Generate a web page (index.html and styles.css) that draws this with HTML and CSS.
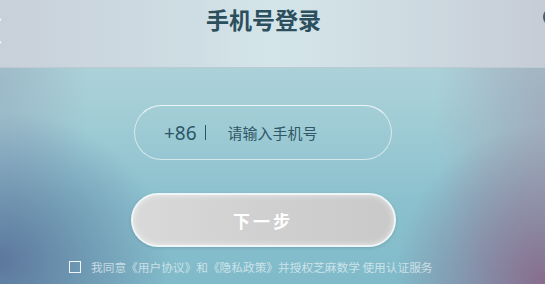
FILE: index.html
```html
<!DOCTYPE html>
<html lang="zh-CN">
<head>
    <meta charset="UTF-8">
    <meta name="viewport" content="width=device-width, initial-scale=1.0">
    <title>手机号登录</title>
    <link rel="stylesheet" href="styles.css">
</head>
<body>
    <div class="page">
        <!-- 顶部标题栏 -->
        <div class="header">
            <span class="back"></span>
            <h1>手机号登录</h1>
            <span class="help"></span>
        </div>

        <div class="content">
            <!-- 手机号输入 -->
            <div class="phone-box">
                <span class="area">+86</span>
                <span class="sep"></span>
                <input type="tel" placeholder="请输入手机号">
            </div>

            <button type="button" class="next-btn">下一步</button>

            <label class="agree">
                <input type="checkbox">
                <span class="box"></span>
                我同意《用户协议》和《隐私政策》并授权芝麻数学 使用认证服务
            </label>
        </div>
    </div>
</body>
</html>
```

FILE: styles.css
```css
html, body {
    margin: 0;
    padding: 0;
}
body {
    font-family: "Noto Sans CJK SC", "Noto Sans", sans-serif;
    width: 545px;
    height: 284px;
    overflow: hidden;
}
.page {
    height: 284px;
    display: flex;
    flex-direction: column;
    background:
        radial-gradient(ellipse 170px 150px at 0% 92%, rgba(88,112,152,0.9), rgba(88,112,152,0) 100%),
        radial-gradient(ellipse 150px 160px at 100% 100%, rgba(135,100,135,0.9), rgba(135,100,135,0) 100%),
        radial-gradient(ellipse 110px 220px at 100% 40%, rgba(160,168,185,0.85), rgba(160,168,185,0) 100%),
        radial-gradient(ellipse 90px 160px at 0% 30%, rgba(150,170,190,0.6), rgba(150,170,190,0) 100%),
        linear-gradient(180deg, #b8d6dc 0%, #a6cfd7 35%, #8bc1ce 70%, #80bac9 100%);
}
.header {
    height: 67px;
    flex-shrink: 0;
    position: relative;
    display: flex;
    justify-content: center;
    padding-right: 18px;
    background: linear-gradient(90deg, #c8d0da 0%, #cedde3 35%, #d4e5ea 50%, #cfdde3 70%, #c6ccd6 100%);
    border-bottom: 1px solid #bccbd2;
}
.header h1 {
    margin: 4px 0 0;
    font-size: 23px;
    font-weight: bold;
    color: #2b4f5c;
    line-height: 30px;
}
.back {
    position: absolute;
    left: -9px;
    top: 22px;
    width: 16px;
    height: 16px;
    border-left: 2px solid #fff;
    border-bottom: 2px solid #fff;
    transform: rotate(45deg);
}
.help {
    position: absolute;
    right: -16px;
    top: 8px;
    width: 14px;
    height: 14px;
    border: 2px solid #4a5c68;
    border-radius: 50%;
}
.content {
    display: flex;
    flex-direction: column;
    align-items: center;
    padding-top: 37px;
    padding-right: 19px;
}
.phone-box {
    width: 256px;
    height: 53px;
    box-sizing: content-box;
    border: 1px solid rgba(255,255,255,0.6);
    border-top-color: rgba(255,255,255,0.8);
    border-radius: 28px;
    display: flex;
    align-items: center;
    color: #2b5666;
}
.area {
    font-family: "Noto Sans", sans-serif;
    font-size: 19px;
    margin-left: 29px;
}
.sep {
    width: 1px;
    height: 15px;
    background: #2b5666;
    margin-left: 8px;
    margin-right: 22px;
}
.phone-box input {
    border: none;
    background: none;
    outline: none;
    width: 150px;
    font-family: "Noto Sans CJK SC", sans-serif;
    font-size: 15px;
    padding: 0;
}
.phone-box input::placeholder {
    color: #2f5868;
}
.next-btn {
    margin-top: 33px;
    width: 265px;
    height: 54px;
    border: 2px solid #eef6f8;
    border-radius: 27px;
    background: linear-gradient(90deg, #d9d9d9 0%, #d0d0d0 50%, #c9c9c9 100%);
    box-shadow: inset 0 0 6px rgba(255,255,255,0.6), 0 1px 3px rgba(60,90,100,0.25);
    color: #fff;
    font-family: "Noto Sans CJK SC", sans-serif;
    font-size: 17px;
    font-weight: bold;
    letter-spacing: 3px;
    cursor: pointer;
}
.agree {
    margin-top: 11px;
    align-self: flex-start;
    margin-left: 69px;
    display: flex;
    align-items: center;
    font-size: 11.7px;
    color: rgba(235,245,248,0.7);
}
.agree input {
    display: none;
}
.box {
    width: 10px;
    height: 10px;
    border: 1.5px solid #eef6f8;
    margin-right: 10px;
}
```
